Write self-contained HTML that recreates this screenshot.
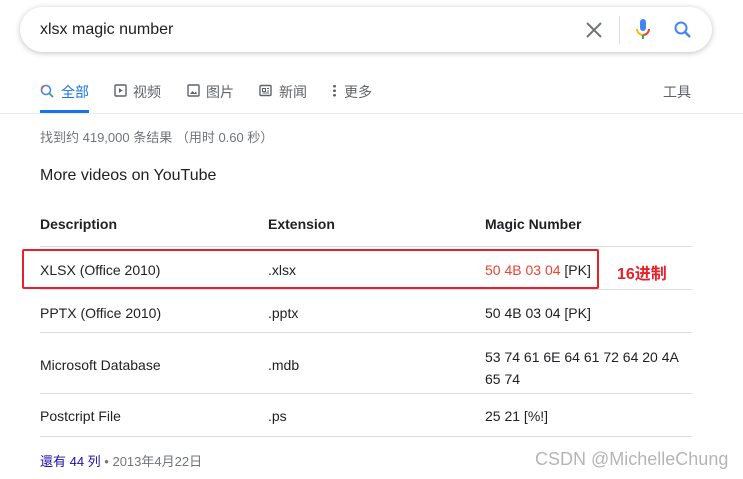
<!DOCTYPE html>
<html><head><meta charset="utf-8"><style>
*{margin:0;padding:0;box-sizing:border-box}
body{width:743px;height:479px;background:#fff;font-family:"Liberation Sans","Noto Sans CJK SC",sans-serif;position:relative;overflow:hidden;color:#202124}
.a{position:absolute;white-space:nowrap}
.box{position:absolute;left:20px;top:7px;width:692px;height:45px;border-radius:23px;box-shadow:0 1px 6px rgba(32,33,36,.28);background:#fff}
.tab{position:absolute;top:82px;font-size:14px;color:#5f6368}
.hl{position:absolute;left:40px;width:652px;height:1px;background:#dadce0}
.c{position:absolute;font-size:14px;color:#202124}
</style></head><body>
<div class="box"></div>
<div class="a" style="left:40px;top:21px;font-size:16px">xlsx magic number</div>
<svg class="a" style="left:584px;top:20px" width="20" height="20" viewBox="0 0 20 20"><path d="M3 3L17 17M17 3L3 17" stroke="#70757a" stroke-width="2"/></svg>
<div class="a" style="left:619px;top:16px;width:1px;height:28px;background:#dadce0"></div>
<svg class="a" style="left:633px;top:18px" width="20" height="24" viewBox="0 0 20 24"><rect x="7" y="1" width="6" height="12" rx="3" fill="#4285f4"/><path d="M4 11a6 6 0 0 0 6 6" stroke="#fbbc05" stroke-width="2" fill="none"/><path d="M16 11a6 6 0 0 1-6 6" stroke="#ea4335" stroke-width="2" fill="none"/><path d="M10 17v4" stroke="#34a853" stroke-width="2"/></svg>
<svg class="a" style="left:673px;top:20px" width="20" height="20" viewBox="0 0 20 20"><circle cx="8" cy="8" r="5.5" stroke="#4285f4" stroke-width="2" fill="none"/><path d="M12 12L17 17" stroke="#4285f4" stroke-width="2.4"/></svg>

<svg class="a" style="left:40px;top:84px" width="14" height="14" viewBox="0 0 14 14"><circle cx="6" cy="6" r="4.5" stroke="#4285f4" stroke-width="1.6" fill="none"/><path d="M9.5 9.5L13 13" stroke="#34a853" stroke-width="1.8"/><path d="M1.6 5A4.5 4.5 0 0 1 4 2" stroke="#ea4335" stroke-width="1.6" fill="none"/></svg>
<div class="tab" style="left:61px;color:#1a73e8">全部</div>
<div class="a" style="left:40px;top:110px;width:49px;height:3px;background:#1a73e8"></div>
<svg class="a" style="left:114px;top:84px" width="13" height="13" viewBox="0 0 13 13"><rect x="1" y="1" width="11" height="11" rx="1" stroke="#5f6368" stroke-width="1.4" fill="none"/><path d="M5 4l3.5 2.5L5 9z" fill="#5f6368"/></svg>
<div class="tab" style="left:133px">视频</div>
<svg class="a" style="left:187px;top:84px" width="13" height="13" viewBox="0 0 13 13"><rect x="1" y="1" width="11" height="11" rx="1" stroke="#5f6368" stroke-width="1.4" fill="none"/><path d="M3 10l2.5-3 2 2 1.5-1.5L10 10z" fill="#5f6368"/></svg>
<div class="tab" style="left:206px">图片</div>
<svg class="a" style="left:259px;top:84px" width="13" height="13" viewBox="0 0 13 13"><rect x="1" y="1.5" width="11" height="10" rx="1" stroke="#5f6368" stroke-width="1.4" fill="none"/><path d="M3.5 4.5h3v3h-3zM8 4.5h2M8 7h2M3.5 9h6.5" stroke="#5f6368" stroke-width="1.1" fill="none"/></svg>
<div class="tab" style="left:279px">新闻</div>
<div class="a" style="left:333px;top:84px;width:3px;height:13px;background:radial-gradient(circle,#5f6368 1.3px,transparent 1.5px) 0 0/3px 4.5px"></div>
<div class="tab" style="left:344px">更多</div>
<div class="tab" style="left:663px">工具</div>
<div class="a" style="left:0;top:113px;width:743px;height:1px;background:#ebebeb"></div>

<div class="a" style="left:40px;top:127px;font-size:13px;color:#70757a">找到约 419,000 条结果 （用时 0.60 秒）</div>
<div class="a" style="left:40px;top:167px;font-size:16px;color:#202124">More videos on YouTube</div>

<div class="c" style="left:40px;top:216px;font-weight:bold">Description</div>
<div class="c" style="left:268px;top:216px;font-weight:bold">Extension</div>
<div class="c" style="left:485px;top:216px;font-weight:bold">Magic Number</div>
<div class="hl" style="top:246px"></div>
<div class="c" style="left:40px;top:262px">XLSX (Office 2010)</div>
<div class="c" style="left:268px;top:262px">.xlsx</div>
<div class="c" style="left:485px;top:262px"><span style="color:#ea4335">50 4B 03 04</span> [PK]</div>
<div class="hl" style="top:289px"></div>
<div class="c" style="left:40px;top:305px">PPTX (Office 2010)</div>
<div class="c" style="left:268px;top:305px">.pptx</div>
<div class="c" style="left:485px;top:305px">50 4B 03 04 [PK]</div>
<div class="hl" style="top:332px"></div>
<div class="c" style="left:40px;top:357px">Microsoft Database</div>
<div class="c" style="left:268px;top:357px">.mdb</div>
<div class="c" style="left:485px;top:346px;line-height:22px;white-space:normal;width:210px">53 74 61 6E 64 61 72 64 20 4A 65 74</div>
<div class="hl" style="top:393px"></div>
<div class="c" style="left:40px;top:408px">Postcript File</div>
<div class="c" style="left:268px;top:408px">.ps</div>
<div class="c" style="left:485px;top:408px">25 21 [%!]</div>
<div class="hl" style="top:436px"></div>

<div class="a" style="left:22px;top:249px;width:577px;height:40px;border:2px solid #e8202a;border-radius:2px"></div>
<div class="a" style="left:617px;top:260px;font-size:16px;font-weight:bold;color:#e8202a">16进制</div>

<div class="a" style="left:40px;top:451px;font-size:13px;color:#70757a"><span style="color:#1a0dab">還有 44 列</span> • 2013年4月22日</div>
<div class="a" style="left:535px;top:449px;font-size:18px;color:#b5b5b5">CSDN @MichelleChung</div>
</body></html>
